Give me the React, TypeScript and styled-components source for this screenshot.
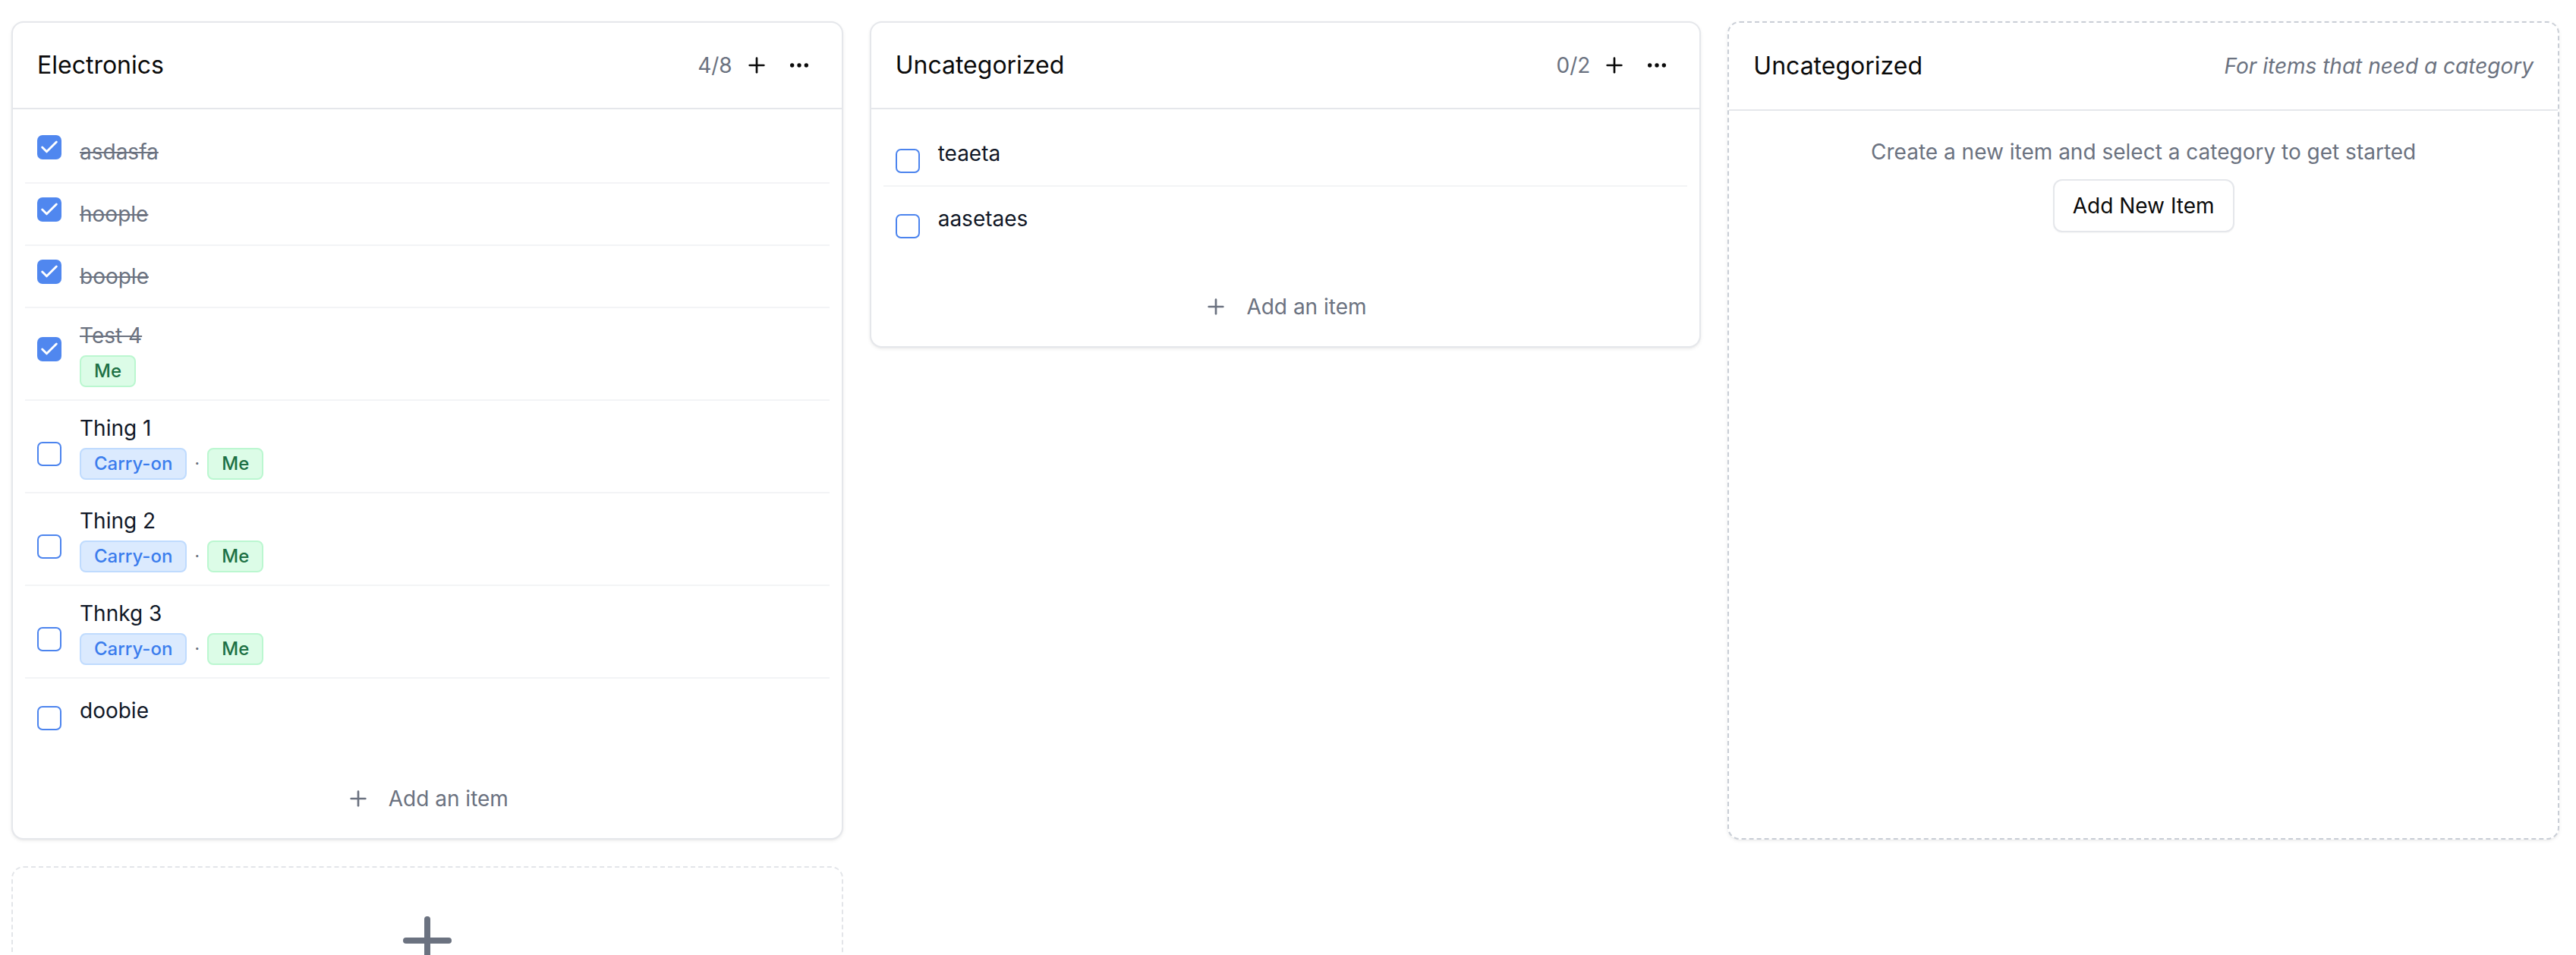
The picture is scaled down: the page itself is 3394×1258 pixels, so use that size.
import React from 'react';
import styled, { createGlobalStyle } from 'styled-components';
import { Plus, Ellipsis, Check } from 'lucide-react';

type TagKind = 'bag' | 'person';
type Tag = { label: string; kind: TagKind };
type Item = { name: string; done: boolean; tags: Tag[] };

const carry: Tag = { label: 'Carry-on', kind: 'bag' };
const me: Tag = { label: 'Me', kind: 'person' };

const electronics: Item[] = [
  { name: 'asdasfa', done: true, tags: [] },
  { name: 'hoople', done: true, tags: [] },
  { name: 'boople', done: true, tags: [] },
  { name: 'Test 4', done: true, tags: [me] },
  { name: 'Thing 1', done: false, tags: [carry, me] },
  { name: 'Thing 2', done: false, tags: [carry, me] },
  { name: 'Thnkg 3', done: false, tags: [carry, me] },
  { name: 'doobie', done: false, tags: [] },
];

const uncategorized: Item[] = [
  { name: 'teaeta', done: false, tags: [] },
  { name: 'aasetaes', done: false, tags: [] },
];

const GlobalStyle = createGlobalStyle`
  html, body {
    margin: 0;
    padding: 0;
    background: #ffffff;
  }
  body {
    font-family: Inter, "Noto Sans", "Liberation Sans", sans-serif;
    -webkit-font-smoothing: antialiased;
  }
  *, *::before, *::after {
    box-sizing: border-box;
  }
`;

const Board = styled.main`
  display: grid;
  grid-template-columns: repeat(3, minmax(0, 1fr));
  column-gap: 35px;
  row-gap: 35px;
  align-items: start;
  padding: 28px 22px 0 15px;
`;

const Card = styled.section<{ $stretch?: boolean; $dashed?: boolean }>`
  display: flex;
  flex-direction: column;
  align-self: ${(p) => (p.$stretch ? 'stretch' : 'start')};
  background: #ffffff;
  border: 2px ${(p) => (p.$dashed ? 'dashed #c9ced6' : 'solid #e5e7eb')};
  border-radius: 16px;
  box-shadow: 0 2px 5px rgba(0, 0, 0, 0.06), 0 1px 2px rgba(0, 0, 0, 0.04);
`;

const CardHeader = styled.header<{ $tall?: boolean }>`
  display: flex;
  align-items: center;
  justify-content: space-between;
  padding: ${(p) => (p.$tall ? '33px 32px' : '32px')};
  border-bottom: 2px solid #e5e7eb;
`;

const CardTitle = styled.h2`
  margin: 0;
  font-size: 32px;
  line-height: 48px;
  font-weight: 400;
  color: #0a0a0a;
`;

const HeaderNote = styled.span`
  font-size: 28px;
  line-height: 40px;
  font-style: italic;
  color: #6b7280;
`;

const Actions = styled.div`
  display: flex;
  align-items: center;
  gap: 8px;
`;

const Count = styled.span`
  font-size: 28px;
  line-height: 40px;
  color: #6b7280;
`;

const IconButton = styled.button`
  display: flex;
  align-items: center;
  justify-content: center;
  padding: 8px;
  border: 0;
  border-radius: 8px;
  background: none;
  color: #0a0a0a;
  cursor: pointer;
`;

const List = styled.ul`
  list-style: none;
  margin: 0;
  padding: 16px;
`;

const Row = styled.li`
  display: flex;
  align-items: center;
  gap: 24px;
  padding: 16px;
  border-bottom: 2px solid #f3f4f6;

  &:last-child {
    border-bottom: none;
  }
`;

const Box = styled.span<{ $checked: boolean }>`
  flex: none;
  display: flex;
  align-items: center;
  justify-content: center;
  width: 32px;
  height: 32px;
  border-radius: 7px;
  background: ${(p) => (p.$checked ? '#5087ef' : '#ffffff')};
  border: ${(p) => (p.$checked ? 'none' : '2.5px solid #4c84ee')};
  margin: ${(p) => (p.$checked ? '0 0 12px' : '20px 0 0')};
  color: #ffffff;
`;

const ItemBody = styled.div`
  display: flex;
  flex-direction: column;
  justify-content: center;
  min-height: 48px;
`;

const ItemName = styled.span<{ $done: boolean }>`
  font-size: 28px;
  line-height: 40px;
  color: ${(p) => (p.$done ? '#6b7280' : '#111827')};
  text-decoration: ${(p) => (p.$done ? 'line-through' : 'none')};
`;

const TagRow = styled.div`
  display: flex;
  align-items: center;
  gap: 10px;
  margin-top: 6px;
`;

const TagChip = styled.span<{ $kind: TagKind }>`
  display: inline-block;
  padding: 3px 17px;
  font-size: 24px;
  line-height: 32px;
  font-weight: 500;
  border-radius: 8px;
  border: 2px solid ${(p) => (p.$kind === 'bag' ? '#bfdbfe' : '#bbf7d0')};
  background: ${(p) => (p.$kind === 'bag' ? '#dbeafe' : '#dcfce7')};
  color: ${(p) => (p.$kind === 'bag' ? '#3b7ded' : '#1d7044')};
`;

const Dot = styled.span`
  font-size: 24px;
  line-height: 32px;
  color: #6b7280;
`;

const AddItem = styled.button`
  display: flex;
  align-items: center;
  justify-content: center;
  gap: 24px;
  width: 100%;
  padding: 38px 0 32px;
  border: 0;
  background: none;
  font-family: inherit;
  font-size: 28px;
  line-height: 40px;
  color: #6b7280;
  cursor: pointer;
`;

const EmptyBody = styled.div`
  flex: 1;
  display: flex;
  flex-direction: column;
  align-items: center;
  gap: 16px;
  padding: 34px 32px 32px;
`;

const EmptyText = styled.p`
  margin: 0;
  font-size: 28px;
  line-height: 40px;
  color: #6b7280;
`;

const OutlineButton = styled.button`
  padding: 13px 24px;
  border: 2px solid #e5e7eb;
  border-radius: 12px;
  background: #ffffff;
  font-family: inherit;
  font-size: 28px;
  line-height: 40px;
  font-weight: 400;
  color: #0a0a0a;
  box-shadow: 0 1px 2px rgba(0, 0, 0, 0.04);
  cursor: pointer;
`;

const AddCategory = styled.button`
  display: flex;
  justify-content: center;
  align-items: flex-start;
  padding: 48px;
  min-height: 220px;
  border: 2px dashed #e3e5e9;
  border-radius: 16px;
  background: #ffffff;
  color: #6b7280;
  cursor: pointer;
`;

function ItemRow({ item }: { item: Item }) {
  return (
    <Row>
      <Box $checked={item.done}>{item.done && <Check size={28} strokeWidth={2.5} />}</Box>
      <ItemBody>
        <ItemName $done={item.done}>{item.name}</ItemName>
        {item.tags.length > 0 && (
          <TagRow>
            {item.tags.map((t, i) => (
              <React.Fragment key={t.label}>
                {i > 0 && <Dot>·</Dot>}
                <TagChip $kind={t.kind}>{t.label}</TagChip>
              </React.Fragment>
            ))}
          </TagRow>
        )}
      </ItemBody>
    </Row>
  );
}

function CategoryCard({ title, items }: { title: string; items: Item[] }) {
  const done = items.filter((i) => i.done).length;
  return (
    <Card>
      <CardHeader>
        <CardTitle>{title}</CardTitle>
        <Actions>
          <Count>
            {done}/{items.length}
          </Count>
          <IconButton aria-label="Add item">
            <Plus size={32} strokeWidth={2} />
          </IconButton>
          <IconButton aria-label="More">
            <Ellipsis size={32} strokeWidth={2} />
          </IconButton>
        </Actions>
      </CardHeader>
      <List>
        {items.map((item) => (
          <ItemRow key={item.name} item={item} />
        ))}
      </List>
      <AddItem>
        <Plus size={32} strokeWidth={2} />
        Add an item
      </AddItem>
    </Card>
  );
}

export default function App() {
  return (
    <>
      <GlobalStyle />
      <Board>
        <CategoryCard title="Electronics" items={electronics} />
        <CategoryCard title="Uncategorized" items={uncategorized} />
        <Card $stretch $dashed>
          <CardHeader $tall>
            <CardTitle>Uncategorized</CardTitle>
            <HeaderNote>For items that need a category</HeaderNote>
          </CardHeader>
          <EmptyBody>
            <EmptyText>Create a new item and select a category to get started</EmptyText>
            <OutlineButton>Add New Item</OutlineButton>
          </EmptyBody>
        </Card>
        <AddCategory aria-label="Add category">
          <Plus size={96} strokeWidth={2} />
        </AddCategory>
      </Board>
    </>
  );
}
